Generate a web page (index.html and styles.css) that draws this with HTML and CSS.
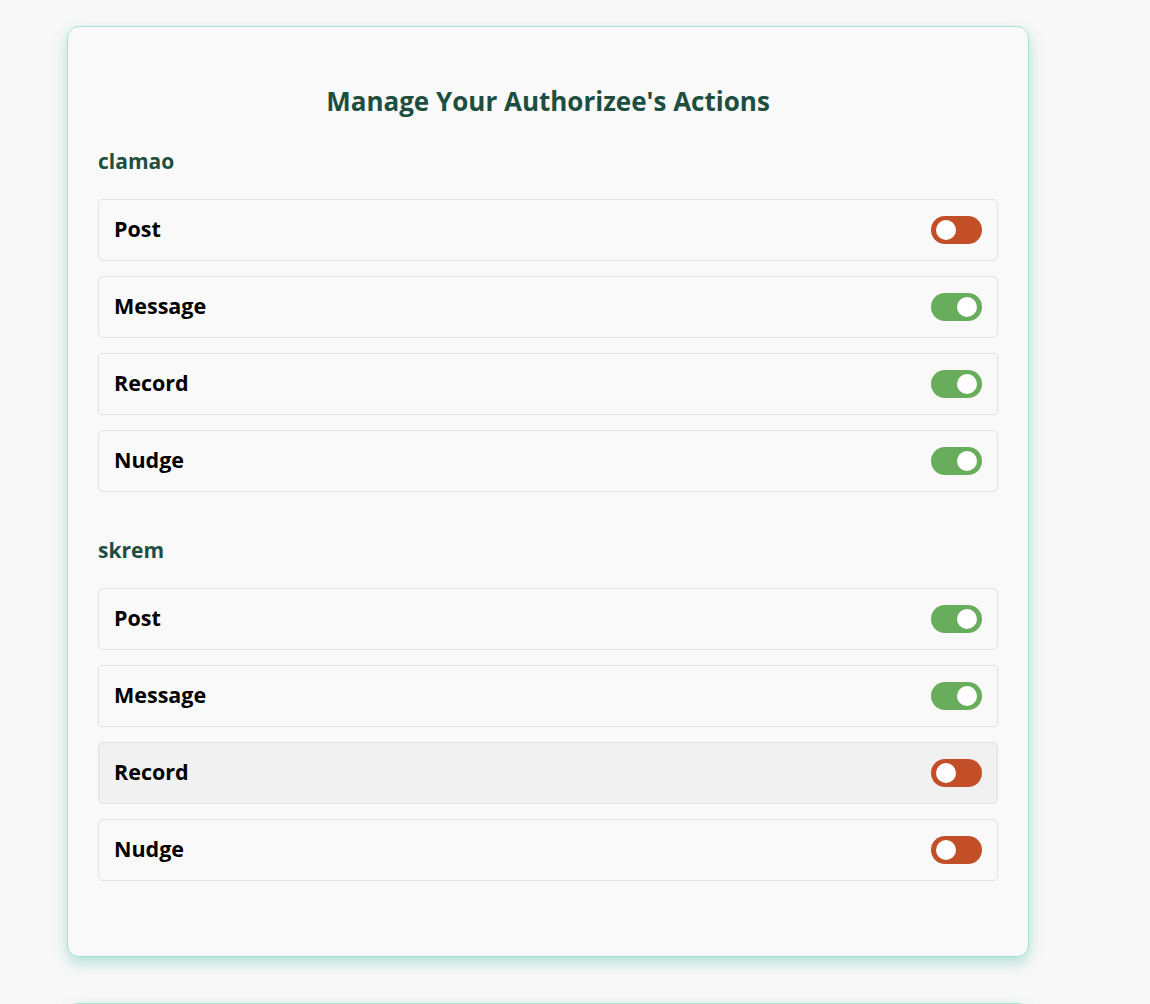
FILE: index.html
```html
<!DOCTYPE html>
<html>
<head>
<meta charset="utf-8">
<link rel="stylesheet" href="styles.css">
</head>
<body>
<div class="page">
  <div class="card">
    <h2 class="title">Manage Your Authorizee's Actions</h2>
    <section class="group">
      <h3 class="name">clamao</h3>
      <div class="rows">
        <div class="row"><span class="label">Post</span><span class="toggle off"><span class="knob"></span></span></div>
        <div class="row"><span class="label">Message</span><span class="toggle on"><span class="knob"></span></span></div>
        <div class="row"><span class="label">Record</span><span class="toggle on"><span class="knob"></span></span></div>
        <div class="row"><span class="label">Nudge</span><span class="toggle on"><span class="knob"></span></span></div>
      </div>
    </section>
    <section class="group">
      <h3 class="name">skrem</h3>
      <div class="rows">
        <div class="row"><span class="label">Post</span><span class="toggle on"><span class="knob"></span></span></div>
        <div class="row"><span class="label">Message</span><span class="toggle on"><span class="knob"></span></span></div>
        <div class="row hover"><span class="label">Record</span><span class="toggle off"><span class="knob"></span></span></div>
        <div class="row"><span class="label">Nudge</span><span class="toggle off"><span class="knob"></span></span></div>
      </div>
    </section>
  </div>
  <div class="card next"></div>
</div>
</body>
</html>
```
FILE: styles.css
```css
html, body {
  margin: 0;
  padding: 0;
  background: #f8f8f8;
  font-family: "Open Sans", "DejaVu Sans", sans-serif;
}
.page {
  padding: 26px 0 0 67px;
  display: flex;
  flex-direction: column;
  gap: 46px;
}
.card {
  box-sizing: border-box;
  width: 962px;
  background: #f9f9f9;
  border: 1px solid #a3e2d3;
  border-radius: 12px;
  box-shadow: 0 6px 14px rgba(110, 200, 180, 0.5);
  padding: 58px 30px 75px;
  display: flex;
  flex-direction: column;
}
.card.next {
  height: 200px;
  padding: 0;
}
.title {
  margin: 0;
  text-align: center;
  font-size: 26px;
  line-height: 32px;
  font-weight: 700;
  color: #1d4e40;
}
.group {
  display: flex;
  flex-direction: column;
}
.group + .group {
  margin-top: 45px;
}
.title + .group {
  margin-top: 31px;
}
.name {
  margin: 0 0 25px;
  font-size: 21px;
  line-height: 26px;
  font-weight: 700;
  color: #1d4e40;
}
.rows {
  display: flex;
  flex-direction: column;
  gap: 15px;
}
.row {
  box-sizing: border-box;
  height: 62px;
  border: 1px solid #e2e2e2;
  border-radius: 5px;
  background: #f9f9f9;
  display: flex;
  align-items: center;
  justify-content: space-between;
  padding: 0 15px;
}
.row.hover {
  background: #f1f1f1;
}
.label {
  font-size: 21.5px;
  line-height: 28px;
  padding-bottom: 2px;
  font-weight: 700;
  color: #000;
}
.toggle {
  box-sizing: border-box;
  width: 51px;
  height: 28px;
  border-radius: 14px;
  padding: 4px 5px;
  display: flex;
  align-items: center;
}
.toggle.off { background: #c24f27; justify-content: flex-start; }
.toggle.on { background: #67ad5b; justify-content: flex-end; }
.knob {
  width: 20px;
  height: 20px;
  border-radius: 50%;
  background: #fff;
}
```
